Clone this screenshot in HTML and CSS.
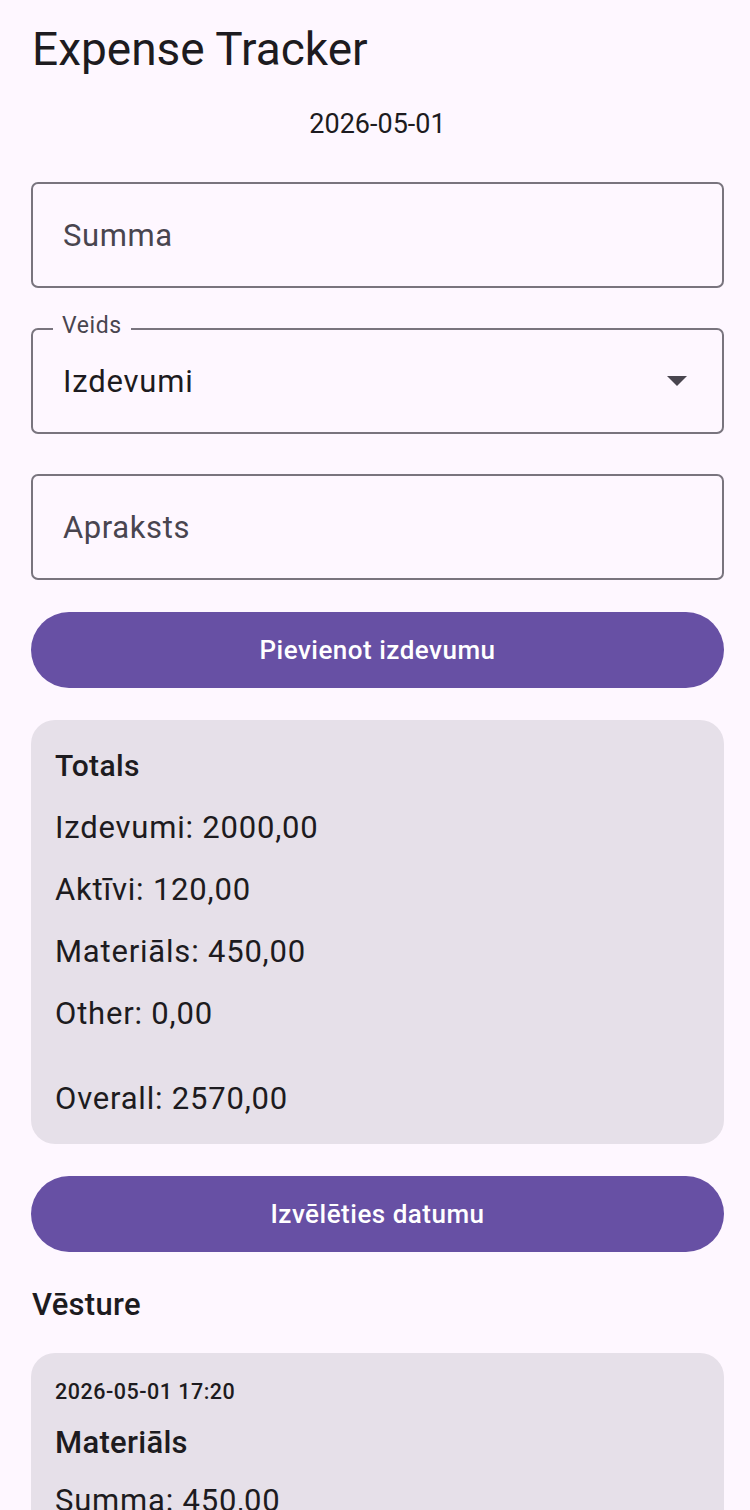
FILE: index.html
```html
<!DOCTYPE html>
<html lang="lv">

<head>
    <meta charset="UTF-8">
    <meta name="viewport" content="width=device-width, initial-scale=1.0">
    <title>Expense Tracker</title>
    <link rel="stylesheet" href="styles.css">
</head>

<body>
    <main class="screen">
        <h1 class="app-title">Expense Tracker</h1>
        <p class="current-date">2026-05-01</p>

        <div class="field">
            <span class="field-placeholder">Summa</span>
        </div>

        <div class="field field-select">
            <span class="field-label">Veids</span>
            <span class="field-value">Izdevumi</span>
            <svg class="field-arrow" width="20" height="10" viewBox="0 0 20 10">
                <path d="M0 0 L20 0 L10 10 Z" fill="#49454f"/>
            </svg>
        </div>

        <div class="field">
            <span class="field-placeholder">Apraksts</span>
        </div>

        <button class="btn">Pievienot izdevumu</button>

        <section class="card totals">
            <h2 class="card-title">Totals</h2>
            <p>Izdevumi: 2000,00</p>
            <p>Aktīvi: 120,00</p>
            <p>Materiāls: 450,00</p>
            <p>Other: 0,00</p>
            <p class="overall">Overall: 2570,00</p>
        </section>

        <button class="btn">Izvēlēties datumu</button>

        <h2 class="section-title">Vēsture</h2>

        <section class="card history">
            <p class="history-date">2026-05-01 17:20</p>
            <h3 class="history-type">Materiāls</h3>
            <p class="history-sum">Summa: 450,00</p>
        </section>
    </main>
</body>

</html>
```

FILE: styles.css
```css
html,
body {
    margin: 0;
    padding: 0;
    background: #fef7ff;
}

body {
    font-family: Roboto, "Noto Sans", sans-serif;
    color: #1d1b20;
}

.screen {
    display: flex;
    flex-direction: column;
    padding: 0 26px 0 31px;
    height: 1510px;
    overflow: hidden;
}

.screen > * {
    flex-shrink: 0;
}

.app-title {
    margin: 22px 0 0 1px;
    font-size: 46px;
    font-weight: 400;
    line-height: 54px;
}

.current-date {
    margin: 32px 0 0;
    text-align: center;
    font-size: 27px;
    line-height: 32px;
}

.field {
    position: relative;
    display: flex;
    align-items: center;
    height: 102px;
    margin-top: 40px;
    padding: 0 30px;
    border: 2px solid #79747e;
    border-radius: 7px;
}

.current-date + .field {
    margin-top: 42px;
}

.field-placeholder {
    font-size: 31px;
    letter-spacing: 0.6px;
    color: #49454f;
}

.field-value {
    flex: 1;
    font-size: 31px;
    letter-spacing: 0.8px;
    color: #1d1b20;
}

.field-label {
    position: absolute;
    top: -19px;
    left: 20px;
    padding: 0 9px;
    background: #fef7ff;
    font-size: 23px;
    line-height: 30px;
    letter-spacing: 0.6px;
    color: #49454f;
}

.field-arrow {
    margin-right: 5px;
}

.btn {
    height: 76px;
    margin-top: 32px;
    border: none;
    border-radius: 38px;
    background: #6750a4;
    color: #ffffff;
    font-family: Roboto, sans-serif;
    font-size: 26px;
    font-weight: 500;
    letter-spacing: 0.5px;
}

.card {
    margin-top: 32px;
    padding: 20px 24px 14px;
    border-radius: 24px;
    background: #e6e0e9;
}

.card p {
    margin: 0;
    font-size: 31px;
    line-height: 62px;
    letter-spacing: 0.8px;
}

.card-title {
    margin: 0 0 6px;
    font-size: 30px;
    font-weight: 500;
    line-height: 51px;
    letter-spacing: 0.4px;
}

.totals .overall {
    margin-top: 23px;
}

.section-title {
    margin: 33px 0 0 1px;
    font-size: 31px;
    font-weight: 500;
    line-height: 40px;
    letter-spacing: 0.3px;
}

.history {
    margin-top: 28px;
    padding-top: 22px;
}

.history .history-date {
    font-size: 21.5px;
    line-height: 34px;
    font-weight: 500;
    letter-spacing: 0.5px;
}

.history-type {
    margin: 14px 0 0;
    font-size: 31px;
    font-weight: 500;
    line-height: 40px;
    letter-spacing: 0.3px;
}

.history .history-sum {
    margin-top: 7px;
}
```
